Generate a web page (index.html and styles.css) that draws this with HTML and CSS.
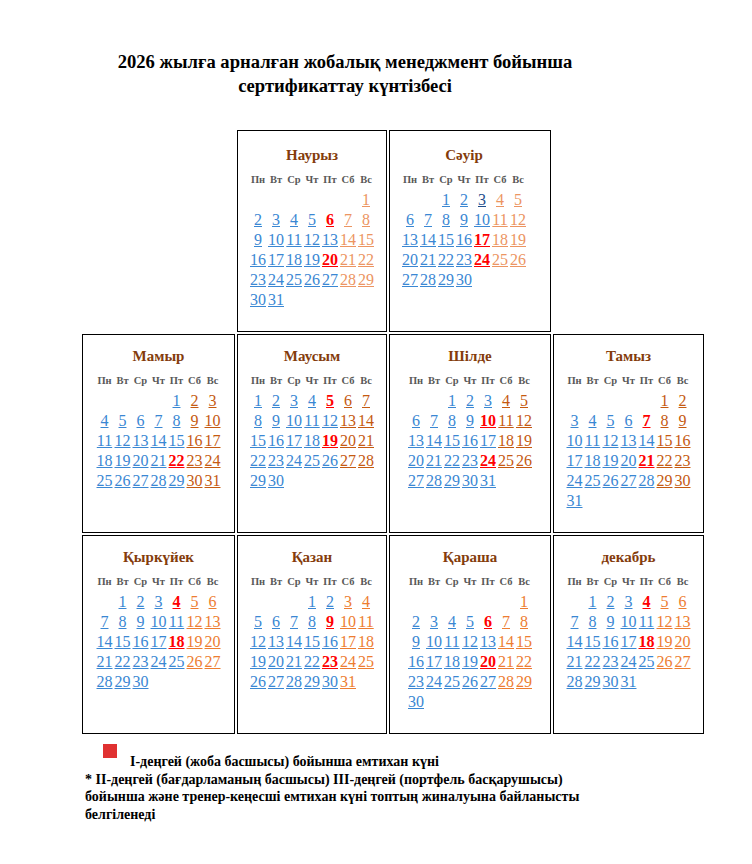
FILE: index.html
```html
<!DOCTYPE html>
<html lang="kk">
<head>
<meta charset="utf-8">
<title>2026 сертификаттау күнтізбесі</title>
<link rel="stylesheet" href="styles.css">
</head>
<body>
<h1 class="title">2026 жылға арналған жобалық менеджмент бойынша<br>сертификаттау күнтізбесі</h1>

<div class="grid">
  <div class="empty"></div>

  <div class="box row1 spring">
    <div class="cal">
      <div class="mname">Наурыз</div>
      <div class="wk"><span>Пн</span><span>Вт</span><span>Ср</span><span>Чт</span><span>Пт</span><span>Сб</span><span>Вс</span></div>
      <div class="days">
        <span></span><span></span><span></span><span></span><span></span><span></span><span><a class="d we">1</a></span>
        <span><a class="d">2</a></span><span><a class="d">3</a></span><span><a class="d">4</a></span><span><a class="d">5</a></span><span><a class="d ex">6</a></span><span><a class="d we">7</a></span><span><a class="d we">8</a></span>
        <span><a class="d">9</a></span><span><a class="d">10</a></span><span><a class="d">11</a></span><span><a class="d">12</a></span><span><a class="d">13</a></span><span><a class="d we">14</a></span><span><a class="d we">15</a></span>
        <span><a class="d">16</a></span><span><a class="d">17</a></span><span><a class="d">18</a></span><span><a class="d">19</a></span><span><a class="d ex">20</a></span><span><a class="d we">21</a></span><span><a class="d we">22</a></span>
        <span><a class="d">23</a></span><span><a class="d">24</a></span><span><a class="d">25</a></span><span><a class="d">26</a></span><span><a class="d">27</a></span><span><a class="d we">28</a></span><span><a class="d we">29</a></span>
        <span><a class="d">30</a></span><span><a class="d">31</a></span>
      </div>
    </div>
  </div>

  <div class="box row1 spring shift">
    <div class="cal">
      <div class="mname">Сәуір</div>
      <div class="wk"><span>Пн</span><span>Вт</span><span>Ср</span><span>Чт</span><span>Пт</span><span>Сб</span><span>Вс</span></div>
      <div class="days">
        <span></span><span></span><span><a class="d">1</a></span><span><a class="d">2</a></span><span><a class="d dark">3</a></span><span><a class="d we">4</a></span><span><a class="d we">5</a></span>
        <span><a class="d">6</a></span><span><a class="d">7</a></span><span><a class="d">8</a></span><span><a class="d">9</a></span><span><a class="d">10</a></span><span><a class="d we">11</a></span><span><a class="d we">12</a></span>
        <span><a class="d">13</a></span><span><a class="d">14</a></span><span><a class="d">15</a></span><span><a class="d">16</a></span><span><a class="d ex">17</a></span><span><a class="d we">18</a></span><span><a class="d we">19</a></span>
        <span><a class="d">20</a></span><span><a class="d">21</a></span><span><a class="d">22</a></span><span><a class="d">23</a></span><span><a class="d ex">24</a></span><span><a class="d we">25</a></span><span><a class="d we">26</a></span>
        <span><a class="d">27</a></span><span><a class="d">28</a></span><span><a class="d">29</a></span><span><a class="d">30</a></span>
      </div>
    </div>
  </div>

  <div class="empty"></div>

  <div class="box summer">
    <div class="cal">
      <div class="mname">Мамыр</div>
      <div class="wk"><span>Пн</span><span>Вт</span><span>Ср</span><span>Чт</span><span>Пт</span><span>Сб</span><span>Вс</span></div>
      <div class="days">
        <span></span><span></span><span></span><span></span><span><a class="d">1</a></span><span><a class="d we">2</a></span><span><a class="d we">3</a></span>
        <span><a class="d">4</a></span><span><a class="d">5</a></span><span><a class="d">6</a></span><span><a class="d">7</a></span><span><a class="d">8</a></span><span><a class="d we">9</a></span><span><a class="d we">10</a></span>
        <span><a class="d">11</a></span><span><a class="d">12</a></span><span><a class="d">13</a></span><span><a class="d">14</a></span><span><a class="d">15</a></span><span><a class="d we">16</a></span><span><a class="d we">17</a></span>
        <span><a class="d">18</a></span><span><a class="d">19</a></span><span><a class="d">20</a></span><span><a class="d">21</a></span><span><a class="d ex">22</a></span><span><a class="d we">23</a></span><span><a class="d we">24</a></span>
        <span><a class="d">25</a></span><span><a class="d">26</a></span><span><a class="d">27</a></span><span><a class="d">28</a></span><span><a class="d">29</a></span><span><a class="d we">30</a></span><span><a class="d we">31</a></span>
      </div>
    </div>
  </div>

  <div class="box summer">
    <div class="cal">
      <div class="mname">Маусым</div>
      <div class="wk"><span>Пн</span><span>Вт</span><span>Ср</span><span>Чт</span><span>Пт</span><span>Сб</span><span>Вс</span></div>
      <div class="days">
        <span><a class="d">1</a></span><span><a class="d">2</a></span><span><a class="d">3</a></span><span><a class="d">4</a></span><span><a class="d ex">5</a></span><span><a class="d we">6</a></span><span><a class="d we">7</a></span>
        <span><a class="d">8</a></span><span><a class="d">9</a></span><span><a class="d">10</a></span><span><a class="d">11</a></span><span><a class="d">12</a></span><span><a class="d we">13</a></span><span><a class="d we">14</a></span>
        <span><a class="d">15</a></span><span><a class="d">16</a></span><span><a class="d">17</a></span><span><a class="d">18</a></span><span><a class="d ex">19</a></span><span><a class="d we">20</a></span><span><a class="d we">21</a></span>
        <span><a class="d">22</a></span><span><a class="d">23</a></span><span><a class="d">24</a></span><span><a class="d">25</a></span><span><a class="d">26</a></span><span><a class="d we">27</a></span><span><a class="d we">28</a></span>
        <span><a class="d">29</a></span><span><a class="d">30</a></span>
      </div>
    </div>
  </div>

  <div class="box summer">
    <div class="cal">
      <div class="mname">Шілде</div>
      <div class="wk"><span>Пн</span><span>Вт</span><span>Ср</span><span>Чт</span><span>Пт</span><span>Сб</span><span>Вс</span></div>
      <div class="days">
        <span></span><span></span><span><a class="d">1</a></span><span><a class="d">2</a></span><span><a class="d">3</a></span><span><a class="d we">4</a></span><span><a class="d we">5</a></span>
        <span><a class="d">6</a></span><span><a class="d">7</a></span><span><a class="d">8</a></span><span><a class="d">9</a></span><span><a class="d ex">10</a></span><span><a class="d we">11</a></span><span><a class="d we">12</a></span>
        <span><a class="d">13</a></span><span><a class="d">14</a></span><span><a class="d">15</a></span><span><a class="d">16</a></span><span><a class="d">17</a></span><span><a class="d we">18</a></span><span><a class="d we">19</a></span>
        <span><a class="d">20</a></span><span><a class="d">21</a></span><span><a class="d">22</a></span><span><a class="d">23</a></span><span><a class="d ex">24</a></span><span><a class="d we">25</a></span><span><a class="d we">26</a></span>
        <span><a class="d">27</a></span><span><a class="d">28</a></span><span><a class="d">29</a></span><span><a class="d">30</a></span><span><a class="d">31</a></span>
      </div>
    </div>
  </div>

  <div class="box summer">
    <div class="cal">
      <div class="mname">Тамыз</div>
      <div class="wk"><span>Пн</span><span>Вт</span><span>Ср</span><span>Чт</span><span>Пт</span><span>Сб</span><span>Вс</span></div>
      <div class="days">
        <span></span><span></span><span></span><span></span><span></span><span><a class="d we">1</a></span><span><a class="d we">2</a></span>
        <span><a class="d">3</a></span><span><a class="d">4</a></span><span><a class="d">5</a></span><span><a class="d">6</a></span><span><a class="d ex">7</a></span><span><a class="d we">8</a></span><span><a class="d we">9</a></span>
        <span><a class="d">10</a></span><span><a class="d">11</a></span><span><a class="d">12</a></span><span><a class="d">13</a></span><span><a class="d">14</a></span><span><a class="d we">15</a></span><span><a class="d we">16</a></span>
        <span><a class="d">17</a></span><span><a class="d">18</a></span><span><a class="d">19</a></span><span><a class="d">20</a></span><span><a class="d ex">21</a></span><span><a class="d we">22</a></span><span><a class="d we">23</a></span>
        <span><a class="d">24</a></span><span><a class="d">25</a></span><span><a class="d">26</a></span><span><a class="d">27</a></span><span><a class="d">28</a></span><span><a class="d we">29</a></span><span><a class="d we">30</a></span>
        <span><a class="d">31</a></span>
      </div>
    </div>
  </div>

  <div class="box autumn">
    <div class="cal">
      <div class="mname">Қыркүйек</div>
      <div class="wk"><span>Пн</span><span>Вт</span><span>Ср</span><span>Чт</span><span>Пт</span><span>Сб</span><span>Вс</span></div>
      <div class="days">
        <span></span><span><a class="d">1</a></span><span><a class="d">2</a></span><span><a class="d">3</a></span><span><a class="d ex">4</a></span><span><a class="d we">5</a></span><span><a class="d we">6</a></span>
        <span><a class="d">7</a></span><span><a class="d">8</a></span><span><a class="d">9</a></span><span><a class="d">10</a></span><span><a class="d">11</a></span><span><a class="d we">12</a></span><span><a class="d we">13</a></span>
        <span><a class="d">14</a></span><span><a class="d">15</a></span><span><a class="d">16</a></span><span><a class="d">17</a></span><span><a class="d ex">18</a></span><span><a class="d we">19</a></span><span><a class="d we">20</a></span>
        <span><a class="d">21</a></span><span><a class="d">22</a></span><span><a class="d">23</a></span><span><a class="d">24</a></span><span><a class="d">25</a></span><span><a class="d we">26</a></span><span><a class="d we">27</a></span>
        <span><a class="d">28</a></span><span><a class="d">29</a></span><span><a class="d">30</a></span>
      </div>
    </div>
  </div>

  <div class="box autumn">
    <div class="cal">
      <div class="mname">Қазан</div>
      <div class="wk"><span>Пн</span><span>Вт</span><span>Ср</span><span>Чт</span><span>Пт</span><span>Сб</span><span>Вс</span></div>
      <div class="days">
        <span></span><span></span><span></span><span><a class="d">1</a></span><span><a class="d">2</a></span><span><a class="d we">3</a></span><span><a class="d we">4</a></span>
        <span><a class="d">5</a></span><span><a class="d">6</a></span><span><a class="d">7</a></span><span><a class="d">8</a></span><span><a class="d ex">9</a></span><span><a class="d we">10</a></span><span><a class="d we">11</a></span>
        <span><a class="d">12</a></span><span><a class="d">13</a></span><span><a class="d">14</a></span><span><a class="d">15</a></span><span><a class="d">16</a></span><span><a class="d we">17</a></span><span><a class="d we">18</a></span>
        <span><a class="d">19</a></span><span><a class="d">20</a></span><span><a class="d">21</a></span><span><a class="d">22</a></span><span><a class="d ex">23</a></span><span><a class="d we">24</a></span><span><a class="d we">25</a></span>
        <span><a class="d">26</a></span><span><a class="d">27</a></span><span><a class="d">28</a></span><span><a class="d">29</a></span><span><a class="d">30</a></span><span><a class="d we">31</a></span>
      </div>
    </div>
  </div>

  <div class="box autumn">
    <div class="cal">
      <div class="mname">Қараша</div>
      <div class="wk"><span>Пн</span><span>Вт</span><span>Ср</span><span>Чт</span><span>Пт</span><span>Сб</span><span>Вс</span></div>
      <div class="days">
        <span></span><span></span><span></span><span></span><span></span><span></span><span><a class="d we">1</a></span>
        <span><a class="d">2</a></span><span><a class="d">3</a></span><span><a class="d">4</a></span><span><a class="d">5</a></span><span><a class="d ex">6</a></span><span><a class="d we">7</a></span><span><a class="d we">8</a></span>
        <span><a class="d">9</a></span><span><a class="d">10</a></span><span><a class="d">11</a></span><span><a class="d">12</a></span><span><a class="d">13</a></span><span><a class="d we">14</a></span><span><a class="d we">15</a></span>
        <span><a class="d">16</a></span><span><a class="d">17</a></span><span><a class="d">18</a></span><span><a class="d">19</a></span><span><a class="d ex">20</a></span><span><a class="d we">21</a></span><span><a class="d we">22</a></span>
        <span><a class="d">23</a></span><span><a class="d">24</a></span><span><a class="d">25</a></span><span><a class="d">26</a></span><span><a class="d">27</a></span><span><a class="d we">28</a></span><span><a class="d we">29</a></span>
        <span><a class="d">30</a></span>
      </div>
    </div>
  </div>

  <div class="box autumn">
    <div class="cal">
      <div class="mname">декабрь</div>
      <div class="wk"><span>Пн</span><span>Вт</span><span>Ср</span><span>Чт</span><span>Пт</span><span>Сб</span><span>Вс</span></div>
      <div class="days">
        <span></span><span><a class="d">1</a></span><span><a class="d">2</a></span><span><a class="d">3</a></span><span><a class="d ex">4</a></span><span><a class="d we">5</a></span><span><a class="d we">6</a></span>
        <span><a class="d">7</a></span><span><a class="d">8</a></span><span><a class="d">9</a></span><span><a class="d">10</a></span><span><a class="d">11</a></span><span><a class="d we">12</a></span><span><a class="d we">13</a></span>
        <span><a class="d">14</a></span><span><a class="d">15</a></span><span><a class="d">16</a></span><span><a class="d">17</a></span><span><a class="d ex">18</a></span><span><a class="d we">19</a></span><span><a class="d we">20</a></span>
        <span><a class="d">21</a></span><span><a class="d">22</a></span><span><a class="d">23</a></span><span><a class="d">24</a></span><span><a class="d">25</a></span><span><a class="d we">26</a></span><span><a class="d we">27</a></span>
        <span><a class="d">28</a></span><span><a class="d">29</a></span><span><a class="d">30</a></span><span><a class="d">31</a></span>
      </div>
    </div>
  </div>
</div>

<div class="legend">
  <div class="key">
    <span class="swatch"></span>
    <span class="key-text">І-деңгей (жоба басшысы) бойынша емтихан күні</span>
  </div>
  <p class="note">* ІІ-деңгей (бағдарламаның басшысы) ІІІ-деңгей (портфель басқарушысы) бойынша және тренер-кеңесші емтихан күні топтың жиналуына байланысты белгіленеді</p>
</div>
</body>
</html>
```

FILE: styles.css
```css
body {
  margin: 0;
  background: #fff;
  color: #000;
  font-family: "Liberation Serif", "Times New Roman", serif;
}

.title {
  width: 690px;
  margin: 0;
  padding-top: 50px;
  text-align: center;
  font-weight: bold;
  font-size: 18.6px;
  line-height: 24px;
}

.grid {
  display: grid;
  grid-template-columns: 153px 150px 162px 151px;
  grid-template-rows: 202px 199px 199px;
  gap: 2px;
  margin: 32px 0 0 82px;
}

.box {
  border: 1px solid #000;
  box-sizing: border-box;
  padding-top: 12px;
}

.box.row1 {
  padding-top: 15px;
}

.cal {
  width: 126px;
  margin: 0 auto;
}

.shift .cal {
  margin-left: 11px;
}

.mname {
  text-align: center;
  font-weight: bold;
  font-size: 15px;
  line-height: 18px;
  color: #843c0c;
}

.wk {
  display: grid;
  grid-template-columns: repeat(7, 18px);
  margin-top: 9px;
  font-size: 10.5px;
  line-height: 14px;
  font-weight: bold;
  color: #595959;
  text-align: center;
}

.days {
  display: grid;
  grid-template-columns: repeat(7, 18px);
  margin-top: 3px;
  font-size: 16px;
  line-height: 20px;
  text-align: center;
}

.d {
  color: #3a87d3;
  text-decoration: underline;
}

.d.dark {
  color: #1f4e8c;
}

.spring .we {
  color: #ec9562;
}

.summer .we {
  color: #c55a11;
}

.autumn .we {
  color: #ed7d31;
}

.d.ex {
  color: #ff0000;
  font-weight: bold;
}

.legend {
  margin: 10px 0 0 85px;
  font-weight: bold;
  font-size: 14px;
  line-height: 17.5px;
}

.key {
  display: flex;
  align-items: flex-start;
}

.swatch {
  width: 14px;
  height: 14px;
  margin-left: 18px;
  background: #e03131;
}

.key-text {
  margin-left: 13px;
  padding-top: 9px;
}

.note {
  width: 520px;
  margin: 0;
}
```
